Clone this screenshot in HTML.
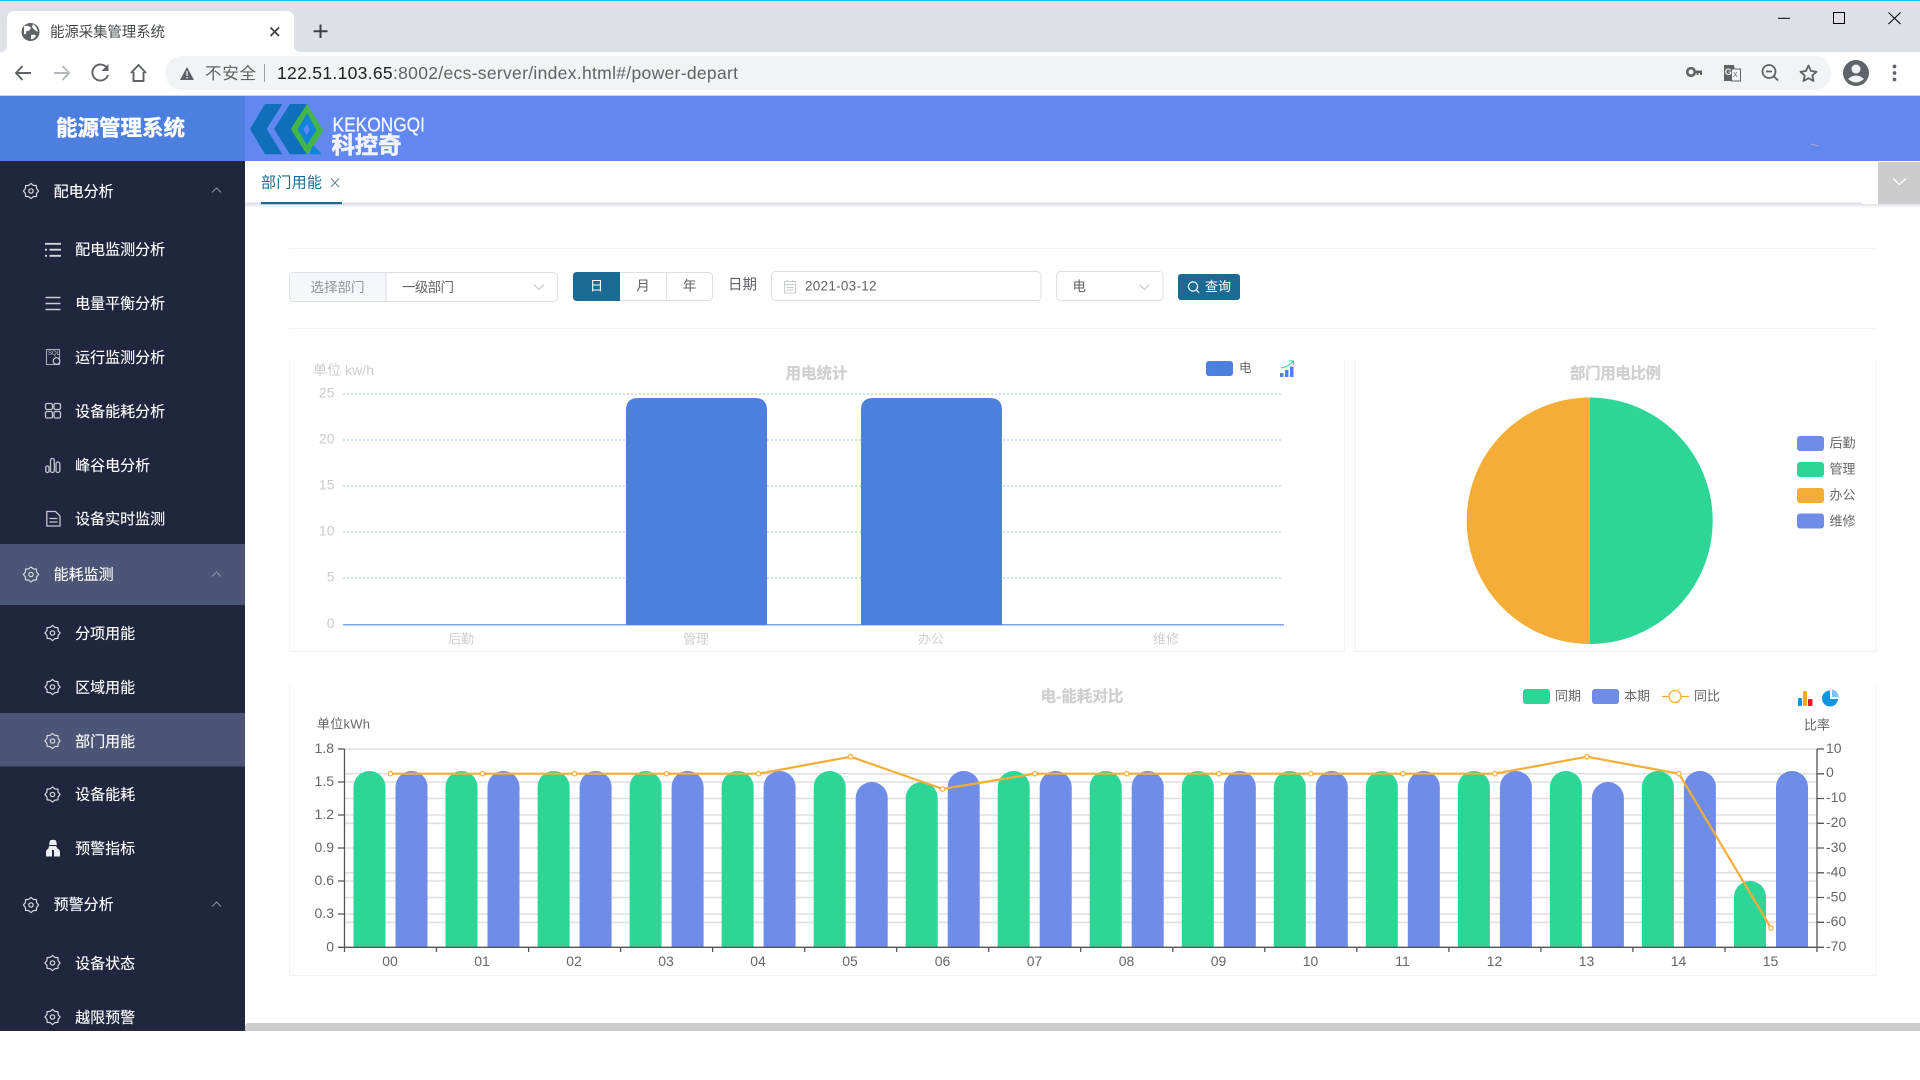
<!DOCTYPE html>
<html lang="zh-CN">
<head>
<meta charset="utf-8">
<title>能源采集管理系统</title>
<style>
html,body{margin:0;padding:0;width:1920px;height:1080px;overflow:hidden;background:#fff}
svg{display:block;position:absolute;left:0;top:0}
text{font-family:"Liberation Sans","Noto Sans CJK SC",sans-serif;dominant-baseline:central}
.m{font-size:15px;fill:#fff;transform:translate(-0.4px,1px);stroke:#fff;stroke-width:.12px}
.ic{fill:none;stroke:#c4c7d0;stroke-width:1.3}
.f{fill:#606266;font-size:13.5px}
.g1{fill:#cbcbcb;font-size:14px}
.g2{fill:#d0d0d0;font-size:13px}
.t{fill:#d0d0d0;font-size:15.5px;font-weight:700;stroke:#d0d0d0;stroke-width:.3px;transform:translateY(1px)}
.l{fill:#666;font-size:13px}
.a{fill:#666;font-size:14px}
.grid{stroke:#e0e0e0;stroke-width:1.6}
.dot{stroke:#b3cdf3;stroke-width:1.3;stroke-dasharray:2 2}
.tick{stroke:#555;stroke-width:1.3}
.pt{fill:#fff;stroke:#f5ad37;stroke-width:1.2}
.tb{fill:#5f6368}
</style>
</head>
<body>
<svg width="1920" height="1080" viewBox="0 0 1920 1080" xmlns="http://www.w3.org/2000/svg">
<defs>
<g id="gear" fill="none" stroke="#d6d8df" stroke-width="1.2" stroke-linejoin="round">
<path d="M7.6 0L5.6 2.4L5.4 5.4L2.4 5.6L0 7.6L-2.4 5.6L-5.4 5.4L-5.6 2.4L-7.6 0L-5.6 -2.4L-5.4 -5.4L-2.4 -5.6L0 -7.6L2.4 -5.6L5.4 -5.4L5.6 -2.4Z"/>
<circle r="2.2"/>
</g>
<g id="chev" fill="none" stroke="#8d92a5" stroke-width="1"><path d="M-4.5 2.5L0 -2L4.5 2.5"/></g>
<g id="sel" fill="none" stroke="#c0c4cc" stroke-width="1.1"><path d="M-5 -2.5L0 2.5L5 -2.5"/></g>
<clipPath id="axisclip"><rect x="344" y="740" width="1474" height="207.3"/></clipPath>
<linearGradient id="shade" x1="0" y1="0" x2="0" y2="1"><stop offset="0" stop-color="#dfe2e8"/><stop offset="1" stop-color="#fff"/></linearGradient>
</defs>

<!-- browser chrome -->
<rect width="1920" height="52" fill="#dee1e6"/>
<rect width="1920" height="1" fill="#1fc4f5"/>
<path d="M0 52Q7 52 7 45V19Q7 11 15 11H286Q294 11 294 19V45Q294 52 301 52Z" fill="#fff"/>
<circle cx="30.500" cy="32" r="9" fill="#5f6368"/>
<path d="M24 26Q29 25 31 28Q29 32 26 31Q27 35 24 34ZM33 24Q37 27 38 32Q34 30 32 27ZM31 35Q35 34 36 36Q33 40 31 39Z" fill="#fff"/>
<text x="50" y="33" font-size="14.500" fill="#45484c" textLength="115">能源采集管理系统</text>
<path d="M270.500 27.500L279 36M279 27.500L270.500 36" stroke="#3c4043" stroke-width="1.7" fill="none"/>
<path d="M320.500 24.500V38M313.500 31.300H327.500" stroke="#3c4043" stroke-width="2" fill="none"/>
<path d="M1778 18.300H1790" stroke="#000" stroke-width="1"/>
<rect x="1833.500" y="12.500" width="11" height="11" fill="none" stroke="#000" stroke-width="1"/>
<path d="M1888.500 12.500L1900.500 24M1900.500 12.500L1888.500 24" stroke="#000" stroke-width="1" fill="none"/>

<rect y="52" width="1920" height="44" fill="#fff"/>
<path d="M31 73H16M22.500 66L16 73L22.500 80" fill="none" stroke="#5f6368" stroke-width="1.900"/>
<path d="M54 73H69M62.500 66L69 73L62.500 80" fill="none" stroke="#b4b7bb" stroke-width="1.900"/>
<path d="M107 68A8 8 0 1 0 108 75" fill="none" stroke="#5f6368" stroke-width="1.900"/>
<path d="M108.500 64V71H101.500Z" fill="#5f6368"/>
<path d="M131 73L138.500 65L146 73M133.500 72V81H143.500V72" fill="none" stroke="#5f6368" stroke-width="1.900"/>
<rect x="165" y="56" width="1666" height="34" rx="17" fill="#f1f3f4"/>
<path d="M187 67L194 80H180Z" fill="#5f6368"/>
<rect x="186.400" y="71" width="1.300" height="5" fill="#f1f3f4"/><rect x="186.400" y="77" width="1.300" height="1.500" fill="#f1f3f4"/>
<text x="205" y="74" font-size="16.500" fill="#5f6368" textLength="51">不安全</text>
<rect x="264" y="64" width="1" height="18" fill="#9aa0a6"/>
<text x="277" y="73" font-size="17.500" fill="#5f6368" textLength="461"><tspan fill="#202124">122.51.103.65</tspan>:8002/ecs-server/index.html#/power-depart</text>

<circle cx="1691" cy="72" r="3.800" fill="none" stroke="#5f6368" stroke-width="2.600"/>
<path d="M1695 70.500H1702V75H1700V73H1698.500V75H1696.500V73H1695Z" fill="#5f6368"/>
<path d="M1724 65H1734L1736 81H1724Z" fill="#5f6368"/>
<rect x="1731.500" y="69" width="9" height="12" fill="#f1f3f4" stroke="#5f6368" stroke-width="1"/>
<text x="1724.800" y="72" font-size="9" fill="#f1f3f4" font-weight="700">G</text>
<text x="1733" y="75.500" font-size="7" fill="#5f6368">X</text>
<circle cx="1769" cy="71.500" r="6.500" fill="none" stroke="#5f6368" stroke-width="1.800"/>
<path d="M1774 76.500L1778 80.500M1766 71.500H1772" stroke="#5f6368" stroke-width="1.800" fill="none"/>
<path d="M1808.500 65.500L1811 71L1816.500 71.800L1812.300 75.500L1813.500 81L1808.500 78.200L1803.500 81L1804.700 75.500L1800.500 71.800L1806 71Z" fill="none" stroke="#5f6368" stroke-width="1.800" stroke-linejoin="round"/>
<circle cx="1856" cy="73" r="13" fill="#5f6368"/>
<circle cx="1856" cy="69" r="4.500" fill="#f1f3f4"/>
<path d="M1848 79Q1856 72 1864 79Q1856 86 1848 79Z" fill="#f1f3f4"/>
<circle cx="1894.500" cy="66.500" r="1.900" fill="#5f6368"/><circle cx="1894.500" cy="73" r="1.900" fill="#5f6368"/><circle cx="1894.500" cy="79.500" r="1.900" fill="#5f6368"/>

<rect y="95" width="1920" height="1.500" fill="#cfd3da"/>

<!-- header -->
<rect y="96" width="245" height="65" fill="#4d7fdf"/>
<rect x="245" y="96" width="1675" height="65" fill="#6387f0"/>
<text x="120.500" y="128.500" font-size="21.500" font-weight="700" fill="#fff" stroke="#fff" stroke-width=".4" text-anchor="middle">能源管理系统</text>
<!-- logo -->
<path d="M265 104H282.300L266.700 129L282.300 154.300H265L250 129Z" fill="#0f6fba"/>
<path d="M290 104H307L292 129L307 154.300H290L274 129Z" fill="#0f6fba"/>
<path d="M307 104L323.300 130.500L312 148L307 154.300L304 150L290.700 129Z" fill="#44b549"/>
<path d="M307 113L316.500 130L307 145L297.500 129.500Z" fill="#1184d8"/>
<path d="M303.500 129.500L307 124L310 129.500L306.500 135Z" fill="#6387f0"/>
<path d="M313 145L322 154.300H309.500Z" fill="#1184d8"/>
<text x="332.500" y="125.500" font-size="20" fill="#f2f4ff" stroke="#f2f4ff" stroke-width=".3" textLength="92.500" lengthAdjust="spacingAndGlyphs">KEKONGQI</text>
<text x="331.500" y="145" font-size="23" font-weight="700" fill="#f2f4ff" stroke="#f2f4ff" stroke-width=".6" textLength="70" lengthAdjust="spacingAndGlyphs">科控奇</text>
<path d="M1811 144L1819 146" stroke="#a8acc0" stroke-width="1"/>

<!-- sidebar -->
<rect y="161" width="245" height="870" fill="#20263d"/>
<rect y="544" width="245" height="61" fill="#4c5575"/>
<rect y="713" width="245" height="53.500" fill="#4c5575"/>

<use href="#gear" x="31" y="191"/><text x="54" y="191" class="m">配电分析</text><use href="#chev" x="216.500" y="190"/>
<path d="M45 243.800H61M45 249.700H47M45 255.800H47M49.500 249.700H61M49.500 255.800H61" stroke="#d6d8df" stroke-width="1.800" fill="none"/>
<text x="75.500" y="249" class="m">配电监测分析</text>
<path d="M45.500 297.500H60.500M45.500 303.500H60.500M45.500 309.500H60.500" stroke="#c9ccd5" stroke-width="1.500" fill="none"/>
<text x="75.500" y="303" class="m">电量平衡分析</text>
<rect x="46.500" y="349.500" width="13" height="15" fill="none" stroke="#a8abb8" stroke-width="1.100"/>
<text x="48" y="354" font-size="6" fill="#c9ccd5">SQL</text>
<circle cx="56.500" cy="361" r="3.300" fill="#20263d" stroke="#c9ccd5" stroke-width="1.200"/>
<text x="75.500" y="357" class="m">运行监测分析</text>
<g class="ic" stroke-width="1.100"><rect x="45.500" y="403.500" width="7" height="6" rx="1.500"/><rect x="54" y="403.500" width="6.500" height="6" rx="1.500"/><rect x="45.500" y="411.500" width="7" height="6.500" rx="1.500"/><rect x="54" y="411.500" width="6.500" height="6.500" rx="1.500"/></g>
<text x="75.500" y="411" class="m">设备能耗分析</text>
<g class="ic" stroke-width="1.100"><rect x="45.800" y="466" width="3.200" height="6.500" rx="1.500"/><rect x="50.500" y="458.500" width="3.800" height="14" rx="1.800"/><rect x="56" y="462" width="3.800" height="10.500" rx="1.800"/></g>
<text x="75.500" y="465" class="m">峰谷电分析</text>
<path d="M46.800 511.500H55.500L60 516V526H46.800ZM49.500 518.500H57.500M49.500 522H57.500" class="ic"/>
<text x="75.500" y="518.500" class="m">设备实时监测</text>

<use href="#gear" x="31" y="574.500"/><text x="54" y="574" class="m">能耗监测</text><use href="#chev" x="216.500" y="574"/>
<use href="#gear" x="52.500" y="633"/><text x="75.500" y="633" class="m">分项用能</text>
<use href="#gear" x="52.500" y="687"/><text x="75.500" y="687" class="m">区域用能</text>
<use href="#gear" x="52.500" y="741"/><text x="75.500" y="741" class="m">部门用能</text>
<use href="#gear" x="52.500" y="794.500"/><text x="75.500" y="794" class="m">设备能耗</text>
<path d="M49 846H56L57.500 848.500Q60 850 60 852V856.500H46V852Q46 850 48.500 848.500ZM50 840.500Q53 839 56 840.500L57 845H49Z" fill="#eceef2"/>
<rect x="52" y="850" width="2" height="6.500" fill="#20263d"/>
<text x="75.500" y="848" class="m">预警指标</text>
<use href="#gear" x="31" y="905"/><text x="54" y="904" class="m">预警分析</text><use href="#chev" x="216.500" y="904"/>
<use href="#gear" x="52.500" y="963"/><text x="75.500" y="963" class="m">设备状态</text>
<use href="#gear" x="52.500" y="1017"/><text x="75.500" y="1017" class="m">越限预警</text>

<!-- tab bar -->
<rect x="245" y="202.300" width="1617" height="1.800" fill="#dfe3ec"/>
<rect x="245" y="204" width="1675" height="4" fill="url(#shade)"/>
<rect x="261" y="202" width="81" height="2.200" fill="#1a6a94"/>
<text x="261" y="183" font-size="15" fill="#1a6a94" textLength="61">部门用能</text>
<path d="M331 178.500L339 187M339 178.500L331 187" stroke="#6d7f8e" stroke-width="1" fill="none"/>
<rect x="1878" y="162" width="42" height="42" fill="#cccccc"/>
<path d="M1893 178.500L1899.500 184.500L1906 178.500" fill="none" stroke="#fff" stroke-width="1.300"/>

<!-- filter row -->
<rect x="289" y="248" width="1588" height="1" fill="#f3f4f6"/>
<rect x="289" y="328" width="1588" height="1" fill="#f3f4f6"/>
<rect x="289.500" y="272.500" width="268" height="29" rx="4" fill="#fff" stroke="#dcdfe6"/>
<path d="M386 273H293.500Q290 273 290 276.500V297.500Q290 301 293.500 301H386Z" fill="#f5f7fa"/>
<path d="M386 272.500V301.500" stroke="#dcdfe6"/>
<text x="337.500" y="287.500" font-size="13.500" fill="#909399" text-anchor="middle">选择部门</text>
<text x="402" y="287.500" class="f" fill="#606266" textLength="52">一级部门</text>
<use href="#sel" x="539" y="287"/>

<rect x="573.500" y="272.500" width="139" height="28" rx="4" fill="#fff" stroke="#dcdfe6"/>
<path d="M620 272H577Q573 272 573 276V297Q573 301 577 301H620Z" fill="#1a6a94"/>
<path d="M666.500 272.500V300.500" stroke="#dcdfe6"/>
<text x="596.500" y="286" font-size="13.500" fill="#fff" text-anchor="middle">日</text>
<text x="643" y="286" class="f" text-anchor="middle">月</text>
<text x="689.500" y="286" class="f" text-anchor="middle">年</text>
<text x="728" y="285.500" font-size="14.500" fill="#606266">日期</text>

<rect x="771.500" y="271.500" width="269.500" height="29" rx="4" fill="#fff" stroke="#dcdfe6"/>
<path d="M784.500 281.500H795.500V293H784.500ZM784.500 284.500H795.500M787.500 280V282M792.500 280V282M786.500 287.500H793.500M786.500 290H793.500" fill="none" stroke="#c9ccd3" stroke-width="1"/>
<text x="805" y="286" font-size="13.500" fill="#606266" textLength="71.500">2021-03-12</text>
<rect x="1056.500" y="271.500" width="106.500" height="29" rx="4" fill="#fff" stroke="#dcdfe6"/>
<text x="1072.500" y="286.500" class="f">电</text>
<use href="#sel" x="1144.500" y="287"/>
<rect x="1178" y="274" width="62" height="26" rx="3" fill="#1a6a94"/>
<circle cx="1193" cy="286.500" r="4.600" fill="none" stroke="#fff" stroke-width="1.200"/>
<path d="M1196.400 290L1199 292.800" stroke="#fff" stroke-width="1.200"/>
<text x="1205" y="286.500" font-size="13" fill="#fff">查询</text>

<!-- chart 1 -->
<path d="M289.500 360V651.500H1344.500V360" fill="none" stroke="#f3f3f5"/>
<text x="313" y="370" class="g1" font-size="13" textLength="61">单位 kw/h</text>
<text x="816.500" y="373" class="t" text-anchor="middle">用电统计</text>
<rect x="1206" y="361" width="27" height="15" rx="3" fill="#4d7fdf"/>
<text x="1239" y="368" font-size="12.500" fill="#666">电</text>
<path d="M1281 368Q1288 367 1293 361.500M1289 361H1293.500V365" fill="none" stroke="#2dd697" stroke-width="1"/>
<rect x="1280" y="373" width="3.500" height="4" fill="#4d7ff5"/><rect x="1285" y="370" width="3.500" height="7" fill="#4d7ff5"/><rect x="1290" y="366.500" width="3.500" height="10.500" fill="#4d7ff5"/>
<g class="g1" text-anchor="end">
<text x="334.500" y="392.500">25</text><text x="334.500" y="438.500">20</text><text x="334.500" y="484.500">15</text><text x="334.500" y="530.500">10</text><text x="334.500" y="576.500">5</text><text x="334.500" y="623">0</text>
</g>
<path class="dot" d="M343 394H1282M343 440H1282M343 486H1282M343 532H1282M343 578H1282"/>
<path d="M343 624.700H1284" stroke="#7ba5e8" stroke-width="1.500"/>
<path d="M626 625V410Q626 398 638 398H755Q767 398 767 410V625Z" fill="#4d7fdf"/>
<path d="M861 625V410Q861 398 873 398H990Q1002 398 1002 410V625Z" fill="#4d7fdf"/>
<g class="g2" text-anchor="middle"><text x="461" y="639">后勤</text><text x="696" y="639">管理</text><text x="931" y="639">办公</text><text x="1166" y="639">维修</text></g>

<!-- chart 2 -->
<path d="M1355.500 360V651.500H1876V360" fill="none" stroke="#f3f3f5"/>
<text x="1615.500" y="373" class="t" text-anchor="middle" textLength="91">部门用电比例</text>
<path d="M1589.700 397.500A123 123.250 0 0 1 1589.700 644Z" fill="#2dd697"/>
<path d="M1589.700 397.500A123 123.250 0 0 0 1589.700 644Z" fill="#f5ad37"/>
<rect x="1797" y="436" width="27" height="15" rx="3" fill="#6f8ce6"/>
<rect x="1797" y="462" width="27" height="15" rx="3" fill="#2dd697"/>
<rect x="1797" y="488" width="27" height="15" rx="3" fill="#f5ad37"/>
<rect x="1797" y="513.500" width="27" height="15" rx="3" fill="#6f8ce6"/>
<g class="l" font-size="12.500"><text x="1829.500" y="443">后勤</text><text x="1829.500" y="469">管理</text><text x="1829.500" y="495">办公</text><text x="1829.500" y="521">维修</text></g>

<!-- chart 3 -->
<path d="M289.500 684V975.500H1876V684" fill="none" stroke="#f3f3f5"/>
<text x="1082" y="696" class="t" font-size="15" text-anchor="middle">电-能耗对比</text>
<rect x="1523" y="689" width="27" height="15" rx="3" fill="#2dd697"/>
<text x="1555" y="696" class="l">同期</text>
<rect x="1592" y="689" width="27" height="15" rx="3" fill="#6f8ce6"/>
<text x="1624" y="696" class="l">本期</text>
<path d="M1662 696.500H1689" stroke="#f5ad37" stroke-width="1.300"/>
<circle cx="1675" cy="696.500" r="6" fill="#fff" stroke="#f5ad37" stroke-width="1.300"/>
<text x="1694" y="696" class="l">同比</text>
<rect x="1798" y="698" width="4" height="8" rx="1" fill="#1296db"/><rect x="1803" y="691" width="4" height="15" rx="1" fill="#f5a623"/><rect x="1808" y="699" width="4.500" height="7" rx="1" fill="#e8112d"/>
<path d="M1830 690.500A8 8 0 1 0 1838 699H1830Z" fill="#1296db"/>
<path d="M1832 689.500A7.500 7.500 0 0 1 1838.500 697H1832Z" fill="#7cc4ee"/>
<text x="317" y="724" class="l" font-size="13.500" textLength="53">单位kWh</text>
<text x="1817" y="725" class="l" text-anchor="middle">比率</text>

<path class="grid" d="M345 749H1817M345 773.800H1817M345 782H1817M345 798.500H1817M345 815H1817M345 823.300H1817M345 848H1817M345 872.800H1817M345 881H1817M345 897.500H1817M345 914H1817M345 922.300H1817"/>

<g clip-path="url(#axisclip)">
<g fill="#2dd697">
<rect x="353.500" y="771" width="32" height="200" rx="16"/><rect x="445.500" y="771" width="32" height="200" rx="16"/><rect x="537.600" y="771" width="32" height="200" rx="16"/><rect x="629.600" y="771" width="32" height="200" rx="16"/><rect x="721.600" y="771" width="32" height="200" rx="16"/><rect x="813.700" y="771" width="32" height="200" rx="16"/><rect x="905.700" y="782" width="32" height="200" rx="16"/><rect x="997.700" y="771" width="32" height="200" rx="16"/><rect x="1089.700" y="771" width="32" height="200" rx="16"/><rect x="1181.800" y="771" width="32" height="200" rx="16"/><rect x="1273.800" y="771" width="32" height="200" rx="16"/><rect x="1365.800" y="771" width="32" height="200" rx="16"/><rect x="1457.900" y="771" width="32" height="200" rx="16"/><rect x="1549.900" y="771" width="32" height="200" rx="16"/><rect x="1641.900" y="771" width="32" height="200" rx="16"/><rect x="1734" y="881" width="32" height="200" rx="16"/>
</g>
<g fill="#6f8ce6">
<rect x="395.500" y="771" width="32" height="200" rx="16"/><rect x="487.500" y="771" width="32" height="200" rx="16"/><rect x="579.600" y="771" width="32" height="200" rx="16"/><rect x="671.600" y="771" width="32" height="200" rx="16"/><rect x="763.600" y="771" width="32" height="200" rx="16"/><rect x="855.700" y="782" width="32" height="200" rx="16"/><rect x="947.700" y="771" width="32" height="200" rx="16"/><rect x="1039.700" y="771" width="32" height="200" rx="16"/><rect x="1131.700" y="771" width="32" height="200" rx="16"/><rect x="1223.800" y="771" width="32" height="200" rx="16"/><rect x="1315.800" y="771" width="32" height="200" rx="16"/><rect x="1407.800" y="771" width="32" height="200" rx="16"/><rect x="1499.900" y="771" width="32" height="200" rx="16"/><rect x="1591.900" y="782" width="32" height="200" rx="16"/><rect x="1683.900" y="771" width="32" height="200" rx="16"/><rect x="1776" y="771" width="32" height="200" rx="16"/>
</g>
</g>

<!-- axes -->
<path class="tick" d="M344.500 749V952M1817 749V952M338 749H344.500M338 782H344.500M338 815H344.500M338 848H344.500M338 881H344.500M338 914H344.500M338 947.300H1824M1817 749H1824M1817 773.800H1824M1817 798.500H1824M1817 823.300H1824M1817 848H1824M1817 872.800H1824M1817 897.500H1824M1817 922.300H1824"/>
<path class="tick" d="M436.500 947V952M528.600 947V952M620.600 947V952M712.600 947V952M804.700 947V952M896.700 947V952M988.700 947V952M1080.700 947V952M1172.800 947V952M1264.800 947V952M1356.800 947V952M1448.900 947V952M1540.900 947V952M1632.900 947V952M1725 947V952"/>

<!-- line -->
<polyline points="390.500,773.700 482.500,773.700 574.600,773.700 666.600,773.700 758.600,773.700 850.700,756.700 942.700,789 1034.700,773.700 1126.700,773.700 1218.800,773.700 1310.800,773.700 1402.800,773.700 1494.900,773.700 1586.900,756.700 1678.900,773.700 1771,928" fill="none" stroke="#f5ad37" stroke-width="2.200"/>
<g class="pt">
<circle cx="390.500" cy="773.700" r="2.200"/><circle cx="482.500" cy="773.700" r="2.200"/><circle cx="574.600" cy="773.700" r="2.200"/><circle cx="666.600" cy="773.700" r="2.200"/><circle cx="758.600" cy="773.700" r="2.200"/><circle cx="850.700" cy="756.700" r="2.200"/><circle cx="942.700" cy="789" r="2.200"/><circle cx="1034.700" cy="773.700" r="2.200"/><circle cx="1126.700" cy="773.700" r="2.200"/><circle cx="1218.800" cy="773.700" r="2.200"/><circle cx="1310.800" cy="773.700" r="2.200"/><circle cx="1402.800" cy="773.700" r="2.200"/><circle cx="1494.900" cy="773.700" r="2.200"/><circle cx="1586.900" cy="756.700" r="2.200"/><circle cx="1678.900" cy="773.700" r="2.200"/><circle cx="1771" cy="928" r="2.200"/>
</g>

<g class="a" text-anchor="end">
<text x="334" y="748">1.8</text><text x="334" y="781">1.5</text><text x="334" y="814">1.2</text><text x="334" y="847">0.9</text><text x="334" y="880">0.6</text><text x="334" y="913">0.3</text><text x="334" y="946.500">0</text>
</g>
<g class="a">
<text x="1826" y="748">10</text><text x="1826" y="772">0</text><text x="1826" y="797">-10</text><text x="1826" y="822">-20</text><text x="1826" y="847">-30</text><text x="1826" y="871.500">-40</text><text x="1826" y="896.500">-50</text><text x="1826" y="921">-60</text><text x="1826" y="946">-70</text>
</g>
<g class="a" text-anchor="middle">
<text x="390" y="961">00</text><text x="482" y="961">01</text><text x="574" y="961">02</text><text x="666" y="961">03</text><text x="758" y="961">04</text><text x="850" y="961">05</text><text x="942.500" y="961">06</text><text x="1034.500" y="961">07</text><text x="1126.500" y="961">08</text><text x="1218.500" y="961">09</text><text x="1310.500" y="961">10</text><text x="1402.500" y="961">11</text><text x="1494.500" y="961">12</text><text x="1586.500" y="961">13</text><text x="1678.500" y="961">14</text><text x="1770.500" y="961">15</text>
</g>

<!-- horizontal scrollbar -->
<path d="M245 1031V1027Q245 1023 249 1023H1920V1031Z" fill="#cccccc"/>
</svg>
</body>
</html>
